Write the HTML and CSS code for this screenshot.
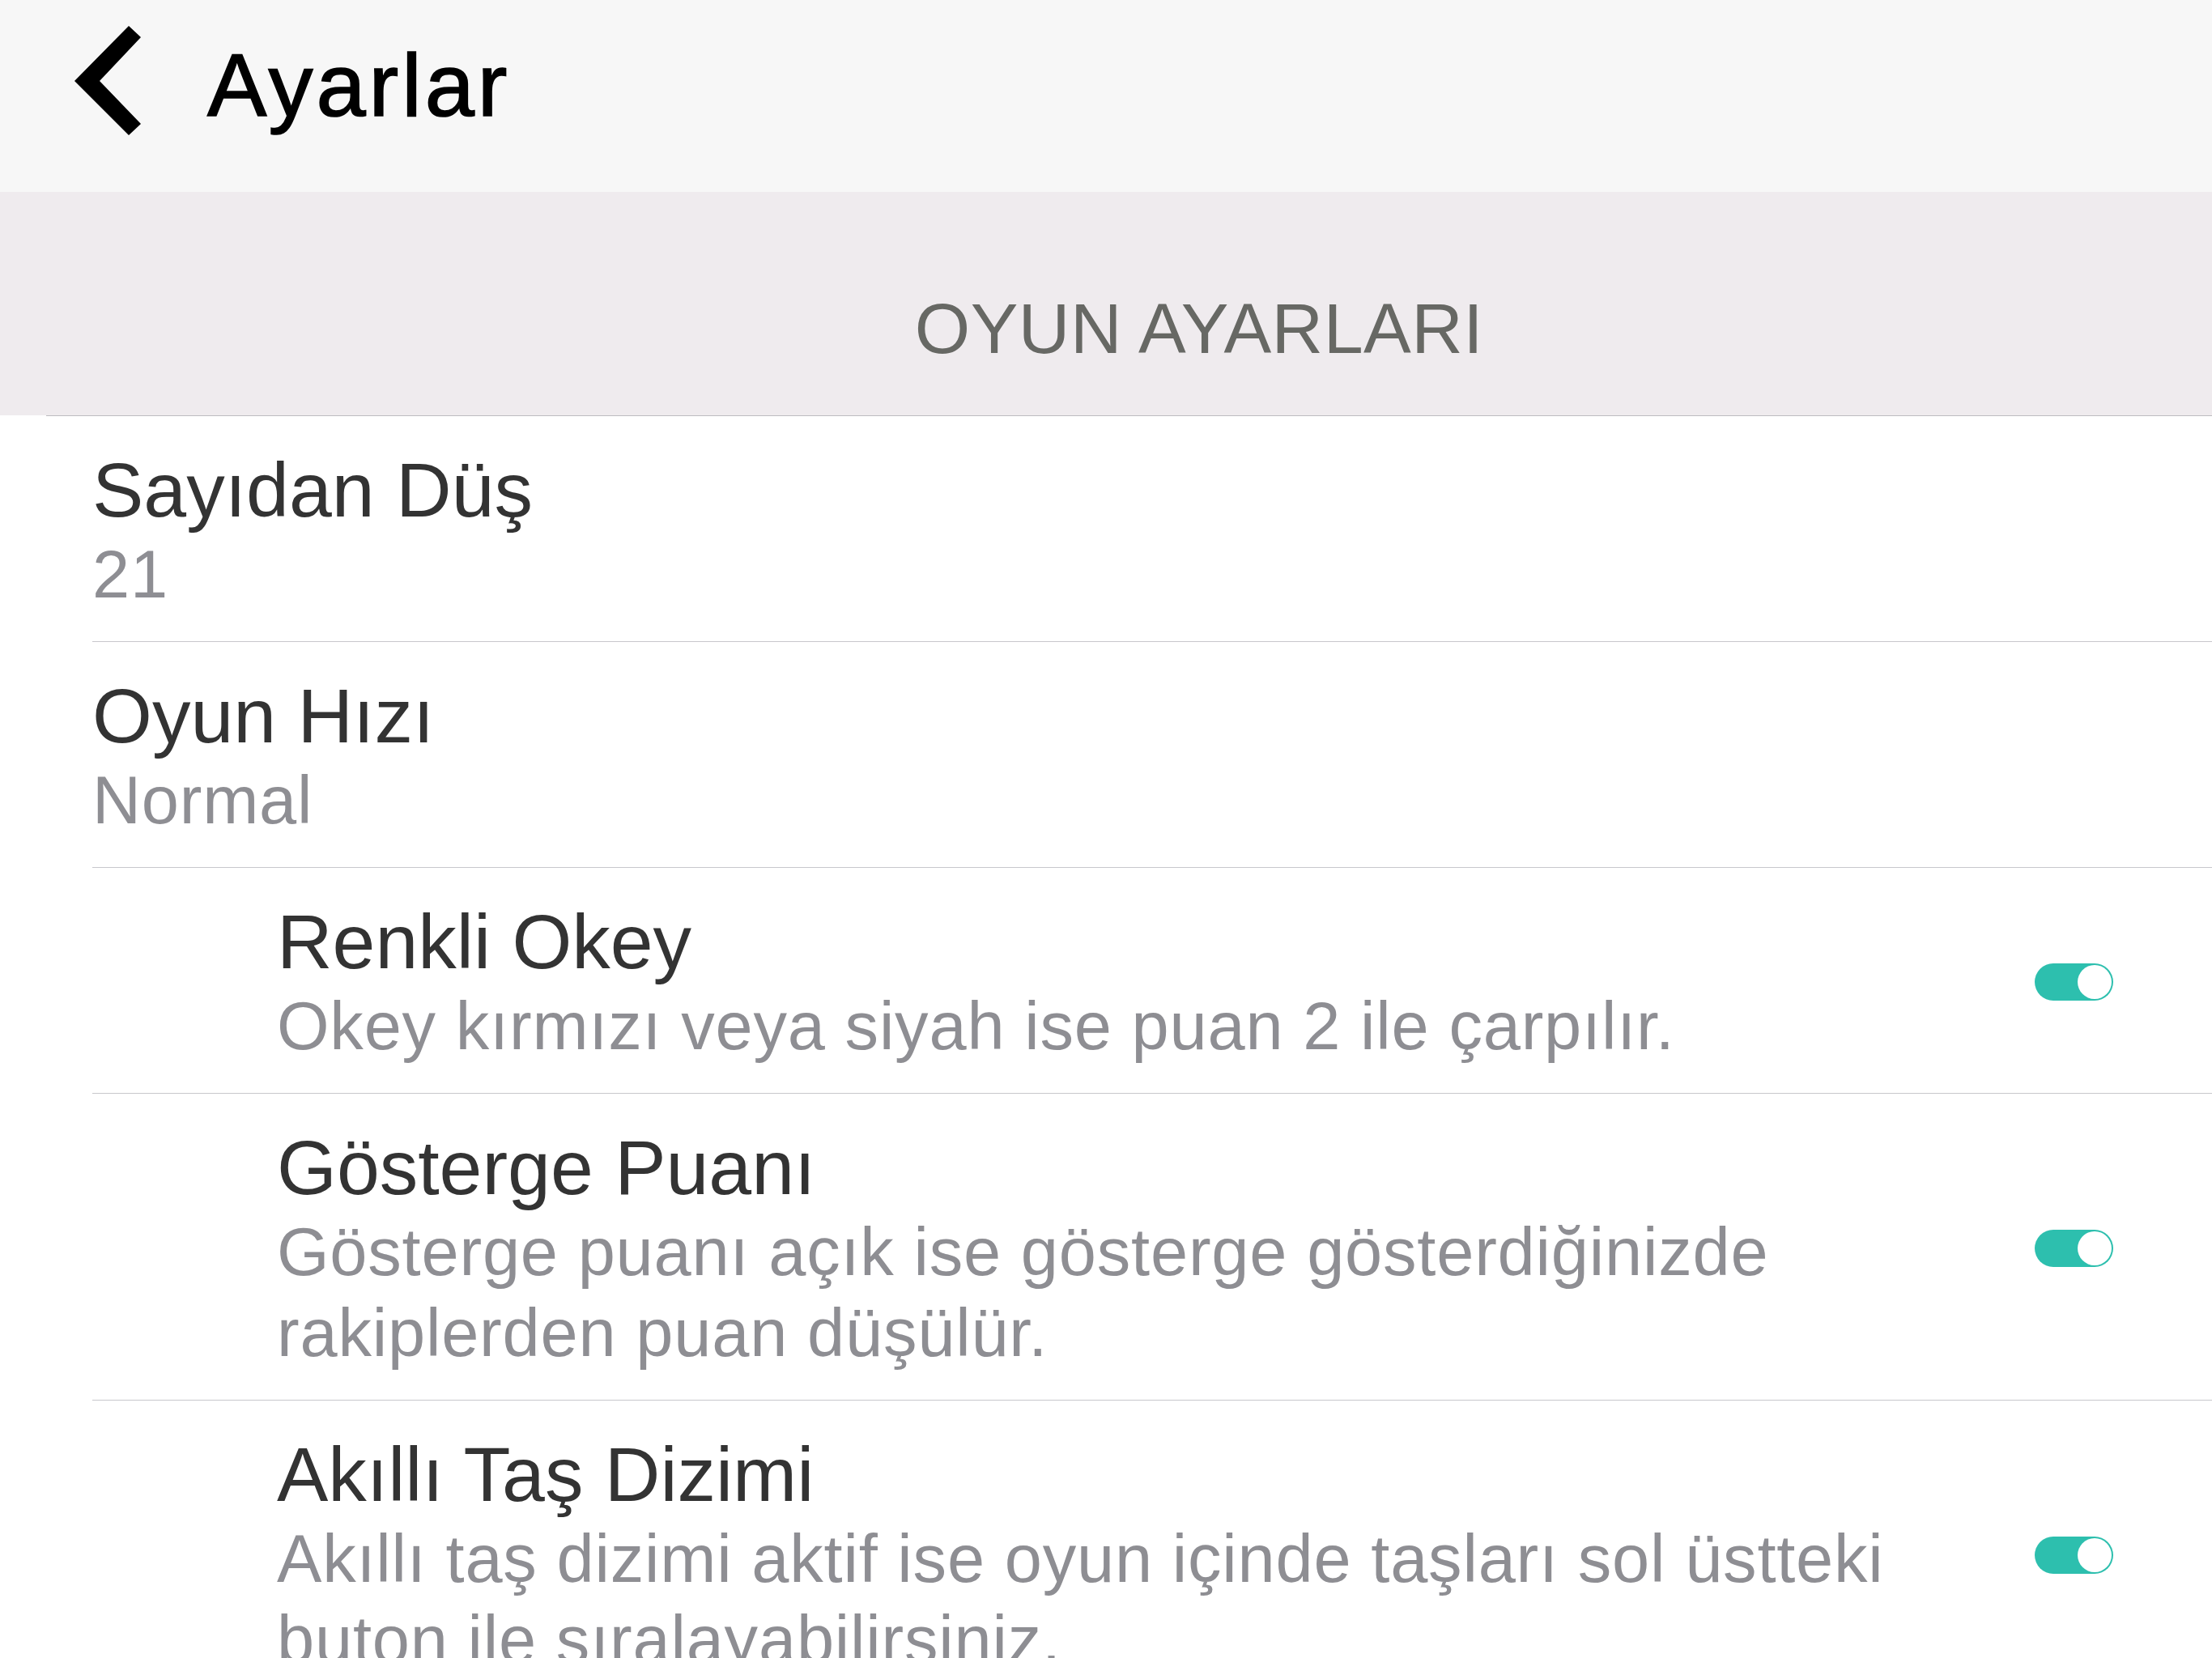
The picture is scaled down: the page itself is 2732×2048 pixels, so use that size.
FILE: index.html
```html
<!DOCTYPE html>
<html lang="tr">
<head>
    <meta charset="UTF-8">
    <meta name="viewport" content="width=device-width, initial-scale=1.0">
    <title>Ayarlar</title>
    <link rel="stylesheet" href="styles.css">
</head>
<body>

<!-- Üst çubuk -->
<header class="topbar">
    <a class="back" href="#">
        <svg width="84" height="136" viewBox="0 0 84 136">
            <polygon points="67,0 82,14 31,68 82,121 67,135 0,68" fill="#000"/>
        </svg>
    </a>
    <h1>Ayarlar</h1>
</header>

<div class="section-head">OYUN AYARLARI</div>

<!-- Ayar listesi -->
<div class="list">
    <div class="row">
        <div class="row-text">
            <div class="row-title">Sayıdan Düş</div>
            <div class="row-sub">21</div>
        </div>
    </div>

    <div class="row">
        <div class="row-text">
            <div class="row-title">Oyun Hızı</div>
            <div class="row-sub">Normal</div>
        </div>
    </div>

    <div class="row indent">
        <div class="row-text">
            <div class="row-title">Renkli Okey</div>
            <div class="row-sub">Okey kırmızı veya siyah ise puan 2 ile çarpılır.</div>
        </div>
        <span class="toggle on"><span class="knob"></span></span>
    </div>

    <div class="row indent">
        <div class="row-text">
            <div class="row-title">Gösterge Puanı</div>
            <div class="row-sub">Gösterge puanı açık ise gösterge gösterdiğinizde rakiplerden puan düşülür.</div>
        </div>
        <span class="toggle on"><span class="knob"></span></span>
    </div>

    <div class="row indent">
        <div class="row-text">
            <div class="row-title">Akıllı Taş Dizimi</div>
            <div class="row-sub">Akıllı taş dizimi aktif ise oyun içinde taşları sol üstteki buton ile sıralayabilirsiniz.</div>
        </div>
        <span class="toggle on"><span class="knob"></span></span>
    </div>
</div>

</body>
</html>
```

FILE: styles.css
```css
/* sayfa */
body {
    margin: 0;
    height: 2048px;
    overflow: hidden;
    background: #fff;
    font-family: "Helvetica Neue", "Liberation Sans", Arial, sans-serif;
}

/* üst çubuk */
.topbar {
    height: 237px;
    box-sizing: border-box;
    padding: 0 0 37px 92px;
    background: #f7f7f7;
    display: flex;
    align-items: center;
    gap: 80px;
}

.back {
    display: flex;
}

.topbar h1 {
    margin: 0;
    padding-top: 10px;
    font-size: 110px;
    font-weight: normal;
    line-height: 1;
    letter-spacing: 4px;
    color: #000;
    -webkit-text-stroke: 1.6px #000;
}

/* bölüm başlığı */
.section-head {
    height: 276px;
    box-sizing: border-box;
    padding: 125px 0 0 230px;
    background: #efebee;
    text-align: center;
    font-size: 88px;
    line-height: 1;
    letter-spacing: 0.5px;
    color: #676864;
}

/* liste */
.list {
    margin-left: 57px;
    border-top: 1px solid #bcbbc0;
}

.row {
    margin-left: 57px;
    padding: 36px 122px 32px 0;
    border-bottom: 1px solid #c8c7cc;
    display: flex;
    align-items: center;
}

.row.indent {
    padding-left: 228px;
}

.row-text {
    flex: 1;
}

.row-title {
    font-size: 95px;
    line-height: 110px;
    color: #333;
}

.row-sub {
    font-size: 83px;
    line-height: 100px;
    letter-spacing: 0.8px;
    color: #8e8e93;
}

/* anahtar */
.toggle {
    margin-left: 70px;
    width: 97px;
    height: 46px;
    box-sizing: border-box;
    padding: 2px;
    border-radius: 23px;
    background: #ccc;
    display: flex;
    justify-content: flex-start;
}

.toggle.on {
    background: #2dbfae;
    justify-content: flex-end;
}

.knob {
    width: 42px;
    height: 42px;
    border-radius: 50%;
    background: #fff;
}
```
